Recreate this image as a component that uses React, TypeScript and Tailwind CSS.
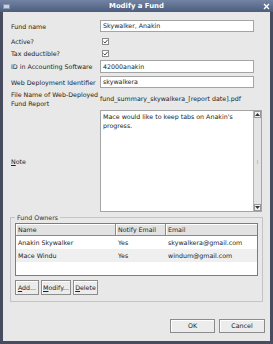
import type { ReactNode } from 'react';

function Check() {
  return (
    <span className="w-[7px] h-[7px] bg-white border border-[#8a8a8a] flex items-center justify-center">
      <svg width="5" height="5" viewBox="0 0 5 5">
        <path d="M0.5 2.6 L2 4 L4.6 0.8" fill="none" stroke="#333" strokeWidth="0.9" />
      </svg>
    </span>
  );
}

function Row({ label, h, mt, children }: { label: ReactNode; h: string; mt: string; children: ReactNode }) {
  return (
    <div className={`flex items-center ${h} ${mt}`}>
      <div className="w-[89px] shrink-0 leading-[9px]">{label}</div>
      {children}
    </div>
  );
}

function Input({ value }: { value: string }) {
  return (
    <div className="w-[154px] h-full bg-white border border-[#a4a4a4] flex items-center px-[2px]">{value}</div>
  );
}

function Btn({ children, w, h = 'h-[15px]' }: { children: ReactNode; w: string; h?: string }) {
  return (
    <div className={`${w} ${h} border border-[#8c8c8c] bg-[#ececec] flex items-center justify-center shadow-[inset_1px_1px_0_#fff]`}>
      {children}
    </div>
  );
}

export default function App() {
  const owners = [
    { name: 'Anakin Skywalker', notify: 'Yes', email: 'skywalkera@gmail.com', bg: 'bg-white' },
    { name: 'Mace Windu', notify: 'Yes', email: 'windum@gmail.com', bg: 'bg-[#efefef]' },
  ];

  return (
    <div className="w-[273px] h-[344px] flex flex-col bg-[#474c5e] text-[#222] text-[6.3px] font-['DejaVu_Sans',sans-serif]">
      <div className="h-[12px] flex items-center px-[3px] bg-gradient-to-b from-[#7283a3] to-[#4d5d7e] text-white">
        <span className="w-[7px] h-[5px] bg-[#c9d0de] border border-[#8a95ab]" />
        <span className="flex-1 text-center font-bold text-[6.9px]">Modify a Fund</span>
        <svg width="7" height="7" viewBox="0 0 7 7">
          <path d="M1 1 L6 6 M6 1 L1 6" stroke="#fff" strokeWidth="1.4" />
        </svg>
      </div>

      <div className="flex-1 mx-[3px] mb-[3px] bg-[#e8e8e8] flex flex-col pl-[8px]">
        <Row label="Fund name" h="h-[12px]" mt="mt-[8px]">
          <Input value="Skywalker, Anakin" />
        </Row>
        <Row label="Active?" h="h-[12px]" mt="mt-[3px]">
          <span className="ml-[2px]"><Check /></span>
        </Row>
        <Row label="Tax deductible?" h="h-[12px]" mt="mt-0">
          <span className="ml-[2px]"><Check /></span>
        </Row>
        <Row label="ID in Accounting Software" h="h-[13px]" mt="mt-[1px]">
          <Input value="42000anakin" />
        </Row>
        <Row label="Web Deployment Identifier" h="h-[12px]" mt="mt-[3px]">
          <Input value="skywalkera" />
        </Row>
        <Row label={<>File Name of Web-Deployed<br />Fund Report</>} h="h-[19px]" mt="mt-[1px]">
          <span>fund_summary_skywalkera_[report date].pdf</span>
        </Row>
        <Row label={<span><span className="underline">N</span>ote</span>} h="h-[102px]" mt="mt-[2px]">
          <div className="w-[162px] h-full flex bg-white border border-[#a4a4a4]">
            <div className="flex-1 px-[2px] pt-[1px] leading-[9px]">Mace would like to keep tabs on Anakin's progress.</div>
            <div className="w-[8px] flex flex-col items-center justify-between bg-[#e4e4e4] border-l border-[#b4b4b4]">
              <span className="w-[7px] h-[7px] border border-[#999] bg-[#f2f2f2] flex items-center justify-center">
                <svg width="5" height="3" viewBox="0 0 5 3"><path d="M0 3 L2.5 0 L5 3Z" fill="#333" /></svg>
              </span>
              <span className="text-[#999] leading-[5px] text-[6px]">⁞</span>
              <span className="w-[7px] h-[7px] border border-[#999] bg-[#f2f2f2] flex items-center justify-center">
                <svg width="5" height="3" viewBox="0 0 5 3"><path d="M0 0 L2.5 3 L5 0Z" fill="#333" /></svg>
              </span>
            </div>
          </div>
        </Row>

        <fieldset className="mt-[1px] ml-[-1px] w-[253px] h-[89px] border border-[#c4c4c4] px-[4px] pb-[4px] flex flex-col">
          <legend className="px-[2px] text-[#333]">Fund Owners</legend>
          <div className="mt-[1px] h-[53px] bg-white border border-[#7c7c7c] flex flex-col">
            <div className="h-[12px] flex bg-[#e2e2e2] border-b border-[#8a8a8a]">
              <div className="w-[100px] pl-[2px] flex items-center border-r border-[#8a8a8a] shadow-[inset_1px_1px_0_#fff]">Name</div>
              <div className="w-[50px] pl-[2px] flex items-center border-r border-[#8a8a8a] shadow-[inset_1px_1px_0_#fff]">Notify Email</div>
              <div className="flex-1 pl-[2px] flex items-center shadow-[inset_1px_1px_0_#fff]">Email</div>
            </div>
            {owners.map((o) => (
              <div key={o.name} className={`h-[13px] flex items-center ${o.bg}`}>
                <div className="w-[100px] pl-[2px]">{o.name}</div>
                <div className="w-[50px] pl-[2px]">{o.notify}</div>
                <div className="flex-1 pl-[2px]">{o.email}</div>
              </div>
            ))}
          </div>
          <div className="mt-[4px] flex gap-[2px]">
            <Btn w="w-[24px]"><span><span className="underline">A</span>dd...</span></Btn>
            <Btn w="w-[30px]"><span><span className="underline">M</span>odify...</span></Btn>
            <Btn w="w-[25px]"><span><span className="underline">D</span>elete</span></Btn>
          </div>
        </fieldset>

        <div className="mt-[17px] flex justify-end gap-[4px] pr-[5px]">
          <Btn w="w-[45px]" h="h-[14px]">OK</Btn>
          <Btn w="w-[46px]" h="h-[14px]">Cancel</Btn>
        </div>
      </div>
    </div>
  );
}
